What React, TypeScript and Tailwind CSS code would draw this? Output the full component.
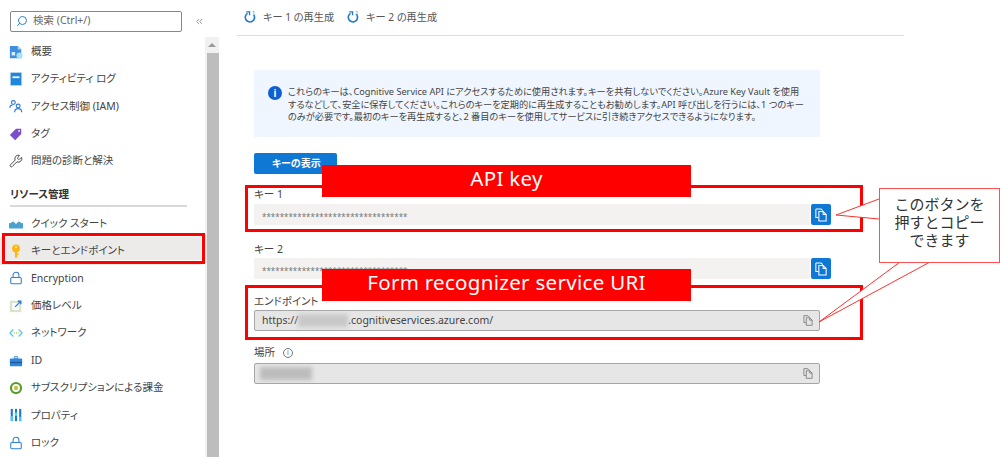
import React from 'react';
import { Search, ChevronsLeft, Wrench, Lock } from 'lucide-react';

const ic = 'w-[14px] h-[14px] shrink-0';

const OverviewIcon = () => (
  <svg viewBox="0 0 16 16" className={ic}>
    <path d="M1 1h9l4 4v10H1z" fill="#3f8fe0" />
    <path d="M10 1l4 4h-4z" fill="#a9d3f5" />
    <rect x="3" y="8" width="4" height="4" fill="#d6ecfb" />
    <circle cx="12" cy="12" r="3.500" fill="#a8e0f5" />
  </svg>
);
const LogIcon = () => (
  <svg viewBox="0 0 16 16" className={ic}>
    <rect x="1.500" y="0.500" width="13" height="15" rx="1" fill="#1f86dc" stroke="#b9d7f0" />
    <rect x="4" y="5" width="8" height="2" fill="#ffffff" />
  </svg>
);
const IamIcon = () => (
  <svg viewBox="0 0 16 16" className={ic} fill="none" stroke="#2f7fd6" strokeWidth="1.300">
    <circle cx="5" cy="4" r="2.200" />
    <circle cx="10.500" cy="8" r="2.200" />
    <path d="M1 10c0-2 1.500-3 3-3M6.500 15c0-2.500 1.800-4 4-4s4 1.500 4 4" />
  </svg>
);
const TagIcon = () => (
  <svg viewBox="0 0 16 16" className={ic}>
    <path d="M1 9l7-7h6v6l-7 7z" fill="#7b4fc9" />
    <circle cx="11.500" cy="4.500" r="1" fill="#ffffff" />
  </svg>
);
const CloudIcon = () => (
  <svg viewBox="0 0 16 16" className={ic}>
    <path d="M1 13a3 3 0 0 1 1-6 4 4 0 0 1 3-2l3 3 3-3a4 4 0 0 1 3 2 3 3 0 0 1 1 6z" fill="#4aa3cf" />
  </svg>
);
const KeyIcon = () => (
  <svg viewBox="0 0 16 16" className={ic}>
    <circle cx="8" cy="5" r="4.500" fill="#fcb714" />
    <rect x="6.800" y="8" width="2.600" height="7.500" fill="#fcb714" />
    <rect x="9" y="11" width="2" height="1.500" fill="#fcb714" />
    <circle cx="8" cy="3.500" r="1" fill="#fff3c4" />
  </svg>
);
const TierIcon = () => (
  <svg viewBox="0 0 16 16" className={ic}>
    <rect x="1" y="2" width="13" height="13" fill="#d5e6c8" />
    <rect x="3.500" y="4.500" width="8" height="8" fill="#ffffff" />
    <path d="M7 9l6-6M10 2.500h3.500V6" stroke="#2f7fd6" strokeWidth="1.600" fill="none" />
  </svg>
);
const NetIcon = () => (
  <svg viewBox="0 0 16 16" className={ic} fill="none" strokeWidth="1.400">
    <path d="M5 4L1 8l4 4" stroke="#50c8f0" />
    <path d="M11 4l4 4-4 4" stroke="#50c8f0" />
    <path d="M6 8h1M8 8h1M10 8h1" stroke="#7fba00" />
  </svg>
);
const IdIcon = () => (
  <svg viewBox="0 0 16 16" className={ic}>
    <path d="M6 3h4v2H6z" fill="none" stroke="#3a8ad6" />
    <rect x="1" y="5" width="14" height="9" rx="1" fill="#2f86d8" />
    <rect x="1" y="9" width="14" height="1.500" fill="#155a9c" />
  </svg>
);
const BillingIcon = () => (
  <svg viewBox="0 0 16 16" className={ic}>
    <circle cx="8" cy="8" r="7" fill="#5a9a2a" />
    <circle cx="8" cy="8" r="4.500" fill="#ffffff" />
    <circle cx="8" cy="8" r="2.500" fill="#b8c93a" />
  </svg>
);
const PropIcon = () => (
  <svg viewBox="0 0 16 16" className={ic}>
    <rect x="2" y="1" width="2.400" height="14" fill="#1f77c9" />
    <rect x="6.800" y="1" width="2.400" height="14" fill="#1f77c9" />
    <rect x="11.600" y="1" width="2.400" height="14" fill="#1f77c9" />
    <rect x="2" y="9" width="2.400" height="6" fill="#50c8f0" />
    <rect x="6.800" y="5" width="2.400" height="4" fill="#50c8f0" />
    <rect x="11.600" y="10" width="2.400" height="5" fill="#50c8f0" />
  </svg>
);
const LockIcon = () => <Lock className={ic} color="#2f7fd6" strokeWidth={1.800} />;

const RegenIcon = ({ n }: { n: string }) => (
  <svg viewBox="0 0 14 14" className="w-[13px] h-[13px] shrink-0" fill="none">
    <path d="M3.800 2.500A5 5 0 1 0 10.500 4" stroke="#1f77c9" strokeWidth="1.700" />
    <path d="M2.500 1h3.500v3.500" stroke="#1f77c9" strokeWidth="1.400" />
    <text x="9" y="4" fontSize="5" fill="#1f77c9">{n}</text>
  </svg>
);

const CopyGlyph = ({ className, color }: { className: string; color: string }) => (
  <svg viewBox="0 0 14 16" className={className} fill="none" stroke={color} strokeWidth="1.200">
    <path d="M1 1h6l2 2M1 1v10h3" />
    <path d="M4.500 4h5l3.500 3.500V15H4.500z" />
    <path d="M9.500 4v3.500H13" />
  </svg>
);

const Row = ({ icon, label, active }: { icon: React.ReactNode; label: string; active?: boolean }) => (
  <div className={`h-[27.4px] flex items-center gap-[8px] pl-[9px] mr-[3px] text-[10.500px] text-[#444] ${active ? 'bg-[#edebe9]' : ''}`}>
    {icon}
    <span className="whitespace-nowrap">{label}</span>
  </div>
);

const Sidebar = () => (
  <div className="w-[219px] shrink-0 h-[457px] flex overflow-hidden">
    <div className="w-[205px] shrink-0">
      <div className="flex items-center h-[38px] pt-[4px]">
        <div className="ml-[10px] w-[180px] h-[21px] border border-[#8a8886] rounded-[2px] flex items-center pl-[5px] gap-[5px] text-[10.500px] text-[#666]">
          <Search size={12} color="#2f7fd6" className="-scale-x-100" />
          <span>検索 (Ctrl+/)</span>
        </div>
        <ChevronsLeft size={11} color="#888" className="ml-[12px]" />
      </div>
      <Row icon={<OverviewIcon />} label="概要" />
      <Row icon={<LogIcon />} label="アクティビティ ログ" />
      <Row icon={<IamIcon />} label="アクセス制御 (IAM)" />
      <Row icon={<TagIcon />} label="タグ" />
      <Row icon={<Wrench className={ic} color="#333" strokeWidth={1.500} />} label="問題の診断と解決" />
      <div className="mt-[12px] mb-[3px] ml-[10px] w-[177px] h-[20px] border-b-2 border-[#d8d8d8] text-[10.500px] font-semibold text-[#333] leading-[15px]">
        リソース管理
      </div>
      <Row icon={<CloudIcon />} label="クイック スタート" />
      <Row icon={<KeyIcon />} label="キーとエンドポイント" active />
      <Row icon={<LockIcon />} label="Encryption" />
      <Row icon={<TierIcon />} label="価格レベル" />
      <Row icon={<NetIcon />} label="ネットワーク" />
      <Row icon={<IdIcon />} label="ID" />
      <Row icon={<BillingIcon />} label="サブスクリプションによる課金" />
      <Row icon={<PropIcon />} label="プロパティ" />
      <Row icon={<LockIcon />} label="ロック" />
    </div>
    <div className="w-[14px] mt-[37px] bg-[#f1f1f1] flex flex-col items-center">
      <div className="h-[16px] w-full flex items-center justify-center">
        <div className="w-0 h-0 border-x-[4px] border-x-transparent border-b-[4px] border-b-[#999]" />
      </div>
      <div className="flex-1 w-[12px] ml-[1px] bg-[#bdbdbd]" />
    </div>
  </div>
);

const CopyBtn = () => (
  <div className="ml-px w-[20px] h-[21px] bg-[#0f78d4] rounded-[2px] flex items-center justify-center">
    <CopyGlyph className="w-[12px] h-[14px]" color="#ffffff" />
  </div>
);

const SecretField = () => (
  <div className="flex items-center">
    <div className="w-[556px] h-[21px] bg-[#f3f2f1] pl-[8px] text-[8px] leading-[26px] text-[#777] overflow-hidden whitespace-nowrap">
      *********************************
    </div>
    <CopyBtn />
  </div>
);

const ReadField = ({ children }: { children: React.ReactNode }) => (
  <div className="w-[566px] h-[21px] bg-[#e6e6e6] border border-[#a6a6a6] rounded-[2px] flex items-center pl-[7px] pr-[6px] text-[10.500px] text-[#444]">
    <div className="flex-1 flex items-center">{children}</div>
    <CopyGlyph className="w-[10px] h-[11px]" color="#777" />
  </div>
);

const Main = () => (
  <div className="flex-1 min-w-0 pl-[18px]">
    <div className="w-[667px] h-[36px] border-b border-[#dddddd] flex items-center gap-[13px] pl-[7px] text-[10.200px] text-[#555]">
      <div className="flex items-center gap-[6px]"><RegenIcon n="1" /><span>キー 1 の再生成</span></div>
      <div className="flex items-center gap-[6px]"><RegenIcon n="2" /><span>キー 2 の再生成</span></div>
    </div>
    <div className="ml-[17px]">
      <div className="mt-[34px] w-[566px] h-[67px] bg-[#f0f6ff] flex items-start pl-[14px] pt-[16px] gap-[6px]">
        <div className="w-[14px] h-[14px] rounded-full bg-[#0f5fd0] text-white flex items-center justify-center shrink-0">
          <span className="text-[10px] font-bold leading-none">i</span>
        </div>
        <p className="text-[9.200px] leading-[12.500px] text-[#444] whitespace-nowrap">
          これらのキーは、Cognitive Service API にアクセスするために使用されます。キーを共有しないでください。Azure Key Vault を使用<br />
          するなどして、安全に保存してください。これらのキーを定期的に再生成することもお勧めします。API 呼び出しを行うには、1 つのキー<br />
          のみが必要です。最初のキーを再生成すると、2 番目のキーを使用してサービスに引き続きアクセスできるようになります。
        </p>
      </div>
      <div className="mt-[16px] w-[83px] h-[21px] bg-[#0f78d4] rounded-[2px] text-white text-[10px] font-semibold flex items-start pl-[18px] pt-[3px]">キーの表示</div>
      <div className="mt-[11px] h-[19px] text-[10.500px] leading-[19px] text-[#444]">キー 1</div>
      <SecretField />
      <div className="mt-[15px] h-[18px] text-[10.500px] leading-[18px] text-[#444]">キー 2</div>
      <SecretField />
      <div className="mt-[13px] h-[18px] text-[10.500px] leading-[18px] text-[#444]">エンドポイント</div>
      <ReadField>
        <span>https://</span>
        <span className="w-[50px] h-[13px] bg-[#c8c8c8] blur-[2px]" />
        <span>.cognitiveservices.azure.com/</span>
      </ReadField>
      <div className="mt-[12px] h-[20px] flex items-center gap-[8px] text-[10.500px] text-[#444]">
        <span>場所</span>
        <span className="w-[10px] h-[10px] rounded-full border border-[#777] text-[7px] leading-[8px] text-center text-[#777]">i</span>
      </div>
      <ReadField>
        <span className="-ml-[2px] w-[52px] h-[13px] bg-[#bcbcbc] blur-[2px]" />
      </ReadField>
    </div>
  </div>
);

const Banner = ({ className, children }: { className: string; children: React.ReactNode }) => (
  <div className={`absolute left-[322px] w-[369px] h-[32px] bg-[#ff0000] text-white text-[20.500px] tracking-[0.3px] flex items-center justify-center pb-[5px] ${className}`}>
    {children}
  </div>
);

export default function App() {
  return (
    <div className="relative w-[1000px] h-[457px] bg-white overflow-hidden flex [font-feature-settings:'palt'] font-['Noto_Sans','Noto_Sans_CJK_JP',sans-serif]">
      <Sidebar />
      <Main />

      {/* annotations on top of the screenshot */}
      <div className="absolute left-[2px] top-[233px] w-[203px] h-[31px] border-[3px] border-[#ff0000] shadow-[inset_0_0_0_1px_#ffffff]" />
      <div className="absolute left-[245px] top-[185px] w-[618px] h-[47px] border-[3px] border-[#ff0000]" />
      <div className="absolute left-[245px] top-[285px] w-[618px] h-[55px] border-[3px] border-[#ff0000]" />
      <Banner className="top-[165px]">API key</Banner>
      <Banner className="top-[269px]">Form recognizer service URI</Banner>

      <svg viewBox="0 0 1000 457" className="absolute inset-0 w-[1000px] h-[457px] pointer-events-none">
        <path d="M879 199L836 215L879 219" fill="#ffffff" stroke="#ff3030" strokeWidth="1" />
        <path d="M900 262L819 322L930 262" fill="#ffffff" stroke="#ff3030" strokeWidth="1" />
      </svg>
      <div className="absolute left-[879px] top-[188px] w-[121px] h-[75px] bg-white border border-[#ff5050] [font-feature-settings:normal] text-[15px] leading-[18px] text-[#333] text-center pt-[6px]">
        このボタンを<br />押すとコピー<br />できます
      </div>
    </div>
  );
}
